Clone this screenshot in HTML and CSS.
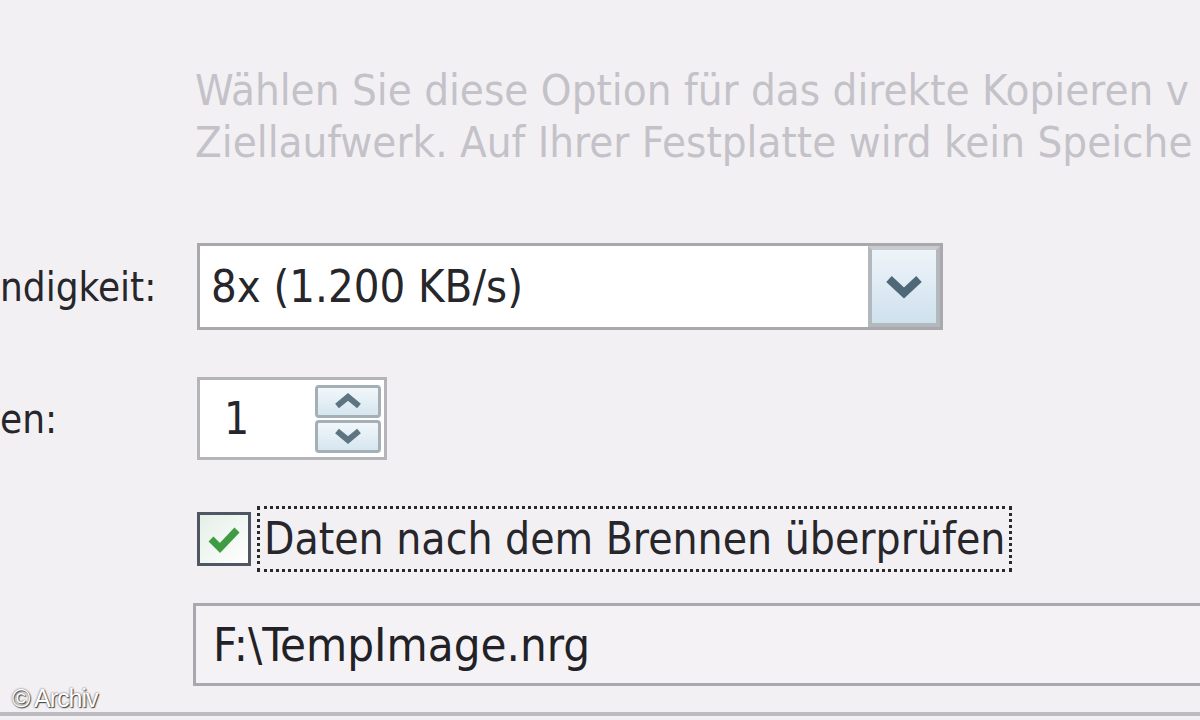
FILE: index.html
```html
<!DOCTYPE html>
<html>
<head>
	<meta charset="utf-8">
	<link rel="stylesheet" href="styles.css">
</head>
<body>
	<div class="dialog">
		<div class="hint">
			<div>Wählen Sie diese Option für das direkte Kopieren v</div>
			<div>Ziellaufwerk. Auf Ihrer Festplatte wird kein Speiche</div>
		</div>

		<div class="row row_speed">
			<div class="label">ndigkeit:</div>
			<div class="combo">
				<div class="combo_text">8x (1.200 KB/s)</div>
				<div class="combo_btn">
					<svg width="38" height="24" viewBox="0 0 38 24"><path d="M4 4 L19 18 L34 4" fill="none" stroke="#4f6878" stroke-width="8"/></svg>
				</div>
			</div>
		</div>

		<div class="row row_copies">
			<div class="label">en:</div>
			<div class="spin">
				<div class="spin_text">1</div>
				<div class="spin_btns">
					<div class="spin_btn"><svg width="30" height="16" viewBox="0 0 30 16"><path d="M4 13 L15 4 L26 13" fill="none" stroke="#5d7583" stroke-width="6"/></svg></div>
					<div class="spin_btn"><svg width="30" height="16" viewBox="0 0 30 16"><path d="M4 3 L15 12 L26 3" fill="none" stroke="#5d7583" stroke-width="6"/></svg></div>
				</div>
			</div>
		</div>

		<div class="row row_check">
			<div class="label"></div>
			<div class="check">
				<svg width="36" height="32" viewBox="0 0 36 32"><path d="M5 16 L14 25 L31 7" fill="none" stroke="#3f9c43" stroke-width="7"/></svg>
			</div>
			<div class="check_label">Daten nach dem Brennen überprüfen</div>
		</div>

		<div class="row row_path">
			<div class="label label_path"></div>
			<div class="path">F:\TempImage.nrg</div>
		</div>

		<div class="bottom_line"></div>
	</div>
	<div class="copyright">© Archiv</div>
</body>
</html>
```
FILE: styles.css
```css
html, body {
	margin: 0;
	padding: 0;
}
body {
	width: 1200px;
	height: 720px;
	overflow: hidden;
	background-color: #f3f0f4;
	font-family: "DejaVu Sans Condensed", "DejaVu Sans", sans-serif;
	color: #26262b;
	position: relative;
}
.dialog {
	padding-top: 64px;
}
.hint {
	margin-left: 195px;
	color: #c4c2c9;
	font-size: 43.5px;
	line-height: 52px;
	white-space: nowrap;
	overflow: hidden;
}
.row {
	display: flex;
	align-items: center;
}
.label {
	width: 197px;
	flex: none;
	font-size: 40px;
	white-space: nowrap;
}
.row_speed {
	margin-top: 75px;
}
.combo {
	width: 746px;
	height: 87px;
	box-sizing: border-box;
	border: solid 3px #a9a8ad;
	background-color: #ffffff;
	display: flex;
	align-items: stretch;
}
.combo_text {
	flex: 1;
	font-size: 45px;
	padding-left: 11px;
	display: flex;
	align-items: center;
}
.combo_btn {
	width: 64px;
	border: solid 4px #b3b8bd;
	border-top-color: #c8ccd0;
	background: linear-gradient(#eef4f9, #cfe1ee);
	display: flex;
	align-items: center;
	justify-content: center;
}
.row_copies {
	margin-top: 47px;
}
.spin {
	width: 190px;
	height: 83px;
	box-sizing: border-box;
	border: solid 3px #b5b4b9;
	background-color: #ffffff;
	display: flex;
	align-items: center;
	padding-right: 3px;
}
.spin_text {
	flex: 1;
	font-size: 44px;
	padding-left: 24px;
}
.spin_btns {
	width: 66px;
	height: 68px;
	display: flex;
	flex-direction: column;
	gap: 2px;
}
.spin_btn {
	flex: 1;
	border: solid 3px #a5afb6;
	border-radius: 4px;
	background: linear-gradient(#f2f7fa, #d6e6f0);
	display: flex;
	align-items: center;
	justify-content: center;
}
.row_check {
	margin-top: 46px;
}
.check {
	width: 54px;
	height: 54px;
	box-sizing: border-box;
	border: solid 3px #4f5862;
	background: linear-gradient(135deg, #e4efe6, #ffffff);
	display: flex;
	align-items: center;
	justify-content: center;
}
.check_label {
	margin-left: 6px;
	font-size: 44px;
	line-height: 60px;
	padding: 0 4px;
	border: dotted 3px #2a2a2a;
	white-space: nowrap;
}
.row_path {
	margin-top: 31px;
}
.label_path {
	width: 193px;
}
.path {
	flex: 1;
	height: 83px;
	margin-right: -20px;
	box-sizing: border-box;
	border: solid 3px #aaa8ae;
	background-color: #f5f2f6;
	font-size: 47px;
	padding-left: 17px;
	display: flex;
	align-items: center;
	color: #222226;
}
.bottom_line {
	margin-top: 26px;
	height: 4px;
	background-color: #bdbbc0;
}
.copyright {
	position: absolute;
	left: 12px;
	bottom: 7px;
	font-family: "Liberation Sans", Arial, sans-serif;
	font-size: 25px;
	letter-spacing: -1px;
	color: #ffffff;
	text-shadow: 0 0 2px #444, 1px 1px 1px #444;
}
```
